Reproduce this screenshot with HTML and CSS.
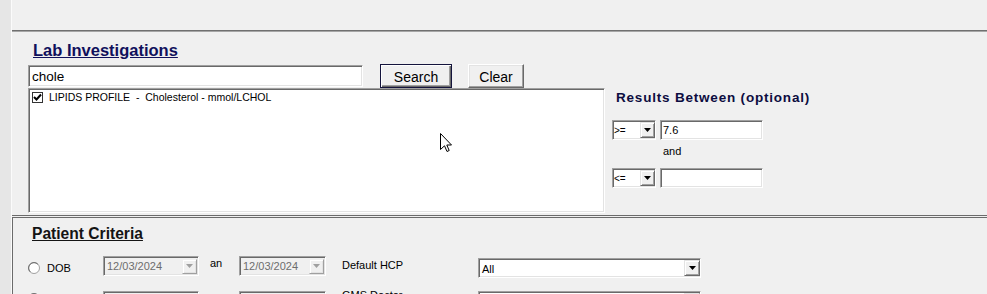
FILE: index.html
```html
<!DOCTYPE html>
<html>
<head>
<meta charset="utf-8">
<title>Lab Investigations</title>
<link rel="stylesheet" href="styles.css">
</head>
<body>
<div class="app">
  <div class="strip"></div>
  <div class="main">
    <div class="toppanel"></div>
    <section class="lab">
      <div class="lab-left">
        <h2 class="lab-title">Lab Investigations</h2>
        <div class="search-row">
          <input class="search-input sunken" type="text" value="chole">
          <button class="btn btn-default">Search</button>
          <button class="btn btn-raised btn-clear">Clear</button>
        </div>
        <div class="listbox sunken">
          <div class="item">
            <span class="check"><svg width="9" height="9" viewBox="0 0 9 9"><path d="M1 4 L3.5 6.5 L8 1.5" fill="none" stroke="#000" stroke-width="2"/></svg></span>
            <span class="item-text">LIPIDS PROFILE&nbsp; -&nbsp; Cholesterol - mmol/LCHOL</span>
          </div>
          <svg class="cursor" width="13" height="20" viewBox="0 0 13 20"><path d="M0.5 0.5 L0.5 16.5 L4.5 12.8 L7 18.5 L9.2 17.5 L6.8 12 L11.5 12 Z" fill="#fff" stroke="#000" stroke-width="1" stroke-linejoin="miter"/></svg>
        </div>
      </div>
      <div class="lab-right">
        <div class="results-title">Results Between (optional)</div>
        <div class="cmp-row">
          <div class="combo-sm sunken"><span class="combo-text">&gt;=</span><span class="dd-btn"><svg width="7" height="4" viewBox="0 0 7 4"><path d="M0 0H7L3.5 4Z" fill="#000"/></svg></span></div>
          <div class="num-input sunken">7.6</div>
        </div>
        <div class="and">and</div>
        <div class="cmp-row cmp-row-2">
          <div class="combo-sm sunken"><span class="combo-text">&lt;=</span><span class="dd-btn"><svg width="7" height="4" viewBox="0 0 7 4"><path d="M0 0H7L3.5 4Z" fill="#000"/></svg></span></div>
          <div class="num-input sunken"></div>
        </div>
      </div>
    </section>
    <section class="patient">
      <h2 class="patient-title">Patient Criteria</h2>
      <div class="crit-row">
        <span class="radio"><svg width="12" height="12" viewBox="0 0 12 12"><circle cx="6" cy="6" r="5.5" fill="#fff" stroke="#a0a0a0"/><path d="M2.2 9.8 A5 5 0 0 1 9.8 2.2" fill="none" stroke="#696969"/></svg></span>
        <span class="lbl lbl-dob">DOB</span>
        <div class="picker sunken"><span class="picker-text">12/03/2024</span><span class="dd-btn dd-dis"><svg width="7" height="4" viewBox="0 0 7 4"><path d="M0 0H7L3.5 4Z" fill="#a0a0a0"/></svg></span></div>
        <span class="lbl lbl-an">an</span>
        <div class="picker picker-2 sunken"><span class="picker-text">12/03/2024</span><span class="dd-btn dd-dis"><svg width="7" height="4" viewBox="0 0 7 4"><path d="M0 0H7L3.5 4Z" fill="#a0a0a0"/></svg></span></div>
        <span class="lbl lbl-hcp">Default HCP</span>
        <div class="combo-lg sunken"><span class="combo-lg-text">All</span><span class="dd-btn dd-lg"><svg width="7" height="4" viewBox="0 0 7 4"><path d="M0 0H7L3.5 4Z" fill="#000"/></svg></span></div>
      </div>
      <div class="crit-row crit-row-2">
        <span class="radio"><svg width="12" height="12" viewBox="0 0 12 12"><circle cx="6" cy="6" r="5.5" fill="#fff" stroke="#a0a0a0"/><path d="M2.2 9.8 A5 5 0 0 1 9.8 2.2" fill="none" stroke="#696969"/></svg></span>
        <span class="lbl lbl-dob"></span>
        <div class="picker sunken"><span class="picker-text"></span><span class="dd-btn dd-dis"><svg width="7" height="4" viewBox="0 0 7 4"><path d="M0 0H7L3.5 4Z" fill="#a0a0a0"/></svg></span></div>
        <span class="lbl lbl-an">an</span>
        <div class="picker picker-2 sunken"><span class="picker-text"></span><span class="dd-btn dd-dis"><svg width="7" height="4" viewBox="0 0 7 4"><path d="M0 0H7L3.5 4Z" fill="#a0a0a0"/></svg></span></div>
        <span class="lbl lbl-hcp">GMS Doctor</span>
        <div class="combo-lg sunken"><span class="combo-lg-text"></span><span class="dd-btn dd-lg"><svg width="7" height="4" viewBox="0 0 7 4"><path d="M0 0H7L3.5 4Z" fill="#000"/></svg></span></div>
      </div>
    </section>
  </div>
</div>
</body>
</html>
```
FILE: styles.css
```css
* { box-sizing: border-box; margin: 0; padding: 0; }
html, body { height: 100%; }
body {
  background: #f0f0f0;
  font-family: "Liberation Sans", Arial, sans-serif;
  color: #000;
  overflow: hidden;
}
.app { display: flex; height: 294px; overflow: hidden; }
.strip { width: 12px; flex: none; background: #e6e6e6; border-right: 1px solid #fbfbfb; }
.main { flex: 1; min-width: 0; display: flex; flex-direction: column; }
.toppanel { height: 31px; flex: none; border-bottom: 1px solid #707070; }

.sunken {
  border: 1px solid;
  border-color: #a0a0a0 #ffffff #ffffff #a0a0a0;
  box-shadow: inset 1px 1px 0 #696969, inset -1px -1px 0 #e3e3e3;
}

.lab {
  height: 185px; flex: none; display: flex;
  border-top: 1px solid #a6a6a6;
  border-bottom: 1px solid #6b6b6b;
}
.lab-left { flex: none; width: 593px; padding-left: 16px; }
.lab-title {
  margin: 9px 0 0 5px;
  font-size: 16.5px; line-height: 19px; font-weight: bold;
  color: #10105c; text-decoration: underline;
}
.search-row { display: flex; align-items: flex-start; height: 24px; margin-top: 4px; }
.search-input {
  width: 335px; height: 22px; margin-top: 1px;
  padding: 0 3px; background: #fff; outline: none;
  font-family: "Liberation Sans", Arial, sans-serif; font-size: 13.5px; color: #000;
}
.btn {
  height: 24px; background: #f0f0f0;
  font-family: "Liberation Sans", Arial, sans-serif; font-size: 14px; color: #000;
  padding-top: 1px;
}
.btn-raised {
  border: 1px solid;
  border-color: #ffffff #696969 #696969 #ffffff;
  box-shadow: inset -1px -1px 0 #a0a0a0, inset 1px 1px 0 #e3e3e3;
}
.btn-default {
  width: 72px; margin-left: 17px;
  border: 1px solid #14143c;
  box-shadow: inset 1px 1px 0 #ffffff, inset -1px -1px 0 #696969, inset -2px -2px 0 #a0a0a0;
}
.btn-clear { width: 56px; margin-left: 16px; }

.listbox { position: relative; width: 577px; height: 125px; background: #fff; padding: 2px 3px 0 3px; }
.item { display: flex; align-items: center; height: 12px; }
.check {
  width: 11px; height: 11px; flex: none;
  border: 1px solid #333; background: #fff;
  display: flex; align-items: center; justify-content: center;
}
.item-text { margin-left: 6px; font-size: 10.5px; line-height: 12px; color: #000; white-space: nowrap; }
.cursor { position: absolute; left: 411px; top: 44px; }

.lab-right { flex: none; margin-left: 7px; padding-top: 58px; }
.results-title {
  margin-left: 4px; font-size: 13.5px; line-height: 16px; font-weight: bold;
  letter-spacing: 0.8px; color: #0c0c40; white-space: nowrap;
}
.cmp-row { display: flex; gap: 4px; height: 20px; margin-top: 14px; }
.cmp-row-2 { margin-top: 10px; }
.combo-sm {
  width: 44px; height: 20px; background: #fff;
  display: flex; align-items: center;
}
.combo-text { flex: 1; font-size: 10px; padding-left: 1px; }
.dd-btn {
  width: 15px; height: 16px; flex: none;
  display: flex; align-items: center; justify-content: center;
  background: #f0f0f0;
  border: 1px solid;
  border-color: #e3e3e3 #696969 #696969 #e3e3e3;
  box-shadow: inset 1px 1px 0 #ffffff, inset -1px -1px 0 #a0a0a0;
}
.num-input { width: 103px; height: 20px; background: #fff; font-size: 11px; line-height: 18px; padding-left: 2px; }
.and { margin: 5px 0 0 51px; font-size: 11px; line-height: 13px; color: #000; }

.patient {
  flex: 1; margin-top: 1px;
  border-top: 1px solid #6b6b6b; border-left: 1px solid #6b6b6b;
  padding-top: 7px;
}
.patient-title {
  margin-left: 19px; font-size: 15.6px; line-height: 18px; font-weight: bold;
  color: #141414; text-decoration: underline;
}
.crit-row {
  display: grid;
  grid-template-columns: 19px 56px 107px 29px 103px 136px 223px;
  align-items: start;
  height: 20px; margin: 13px 0 0 15px;
}
.crit-row-2 { margin-top: 15px; }
.radio { display: block; width: 12px; height: 12px; margin-top: 6px; }
.radio svg { display: block; }
.lbl { font-size: 11px; line-height: 13px; color: #000; white-space: nowrap; }
.lbl-dob { margin-top: 6px; }
.lbl-an { margin-top: 1px; }
.lbl-hcp { margin-top: 3px; }
.crit-row-2 .radio { margin-top: 2px; }
.crit-row-2 .lbl-an { margin-top: 0; }
.crit-row-2 .lbl-hcp { margin-top: -2px; }
.picker {
  width: 96px; height: 20px; background: #f0f0f0;
  display: flex; align-items: center;
}
.picker-2 { width: 87px; }
.picker-text { flex: 1; padding-left: 3px; font-size: 11px; color: #6d6d6d; }
.dd-dis { margin-right: 1px; height: 15px; border-color: #f0f0f0 #a0a0a0 #a0a0a0 #f0f0f0; box-shadow: inset 1px 1px 0 #ffffff, inset -1px -1px 0 #e3e3e3; }
.combo-lg {
  width: 223px; height: 20px; margin-top: 2px; background: #fff;
  display: flex; align-items: center;
}
.crit-row-2 .combo-lg { margin-top: 0; }
.combo-lg-text { flex: 1; padding-left: 3px; font-size: 11px; padding-top: 2px; }
.dd-lg { width: 16px; }
```
